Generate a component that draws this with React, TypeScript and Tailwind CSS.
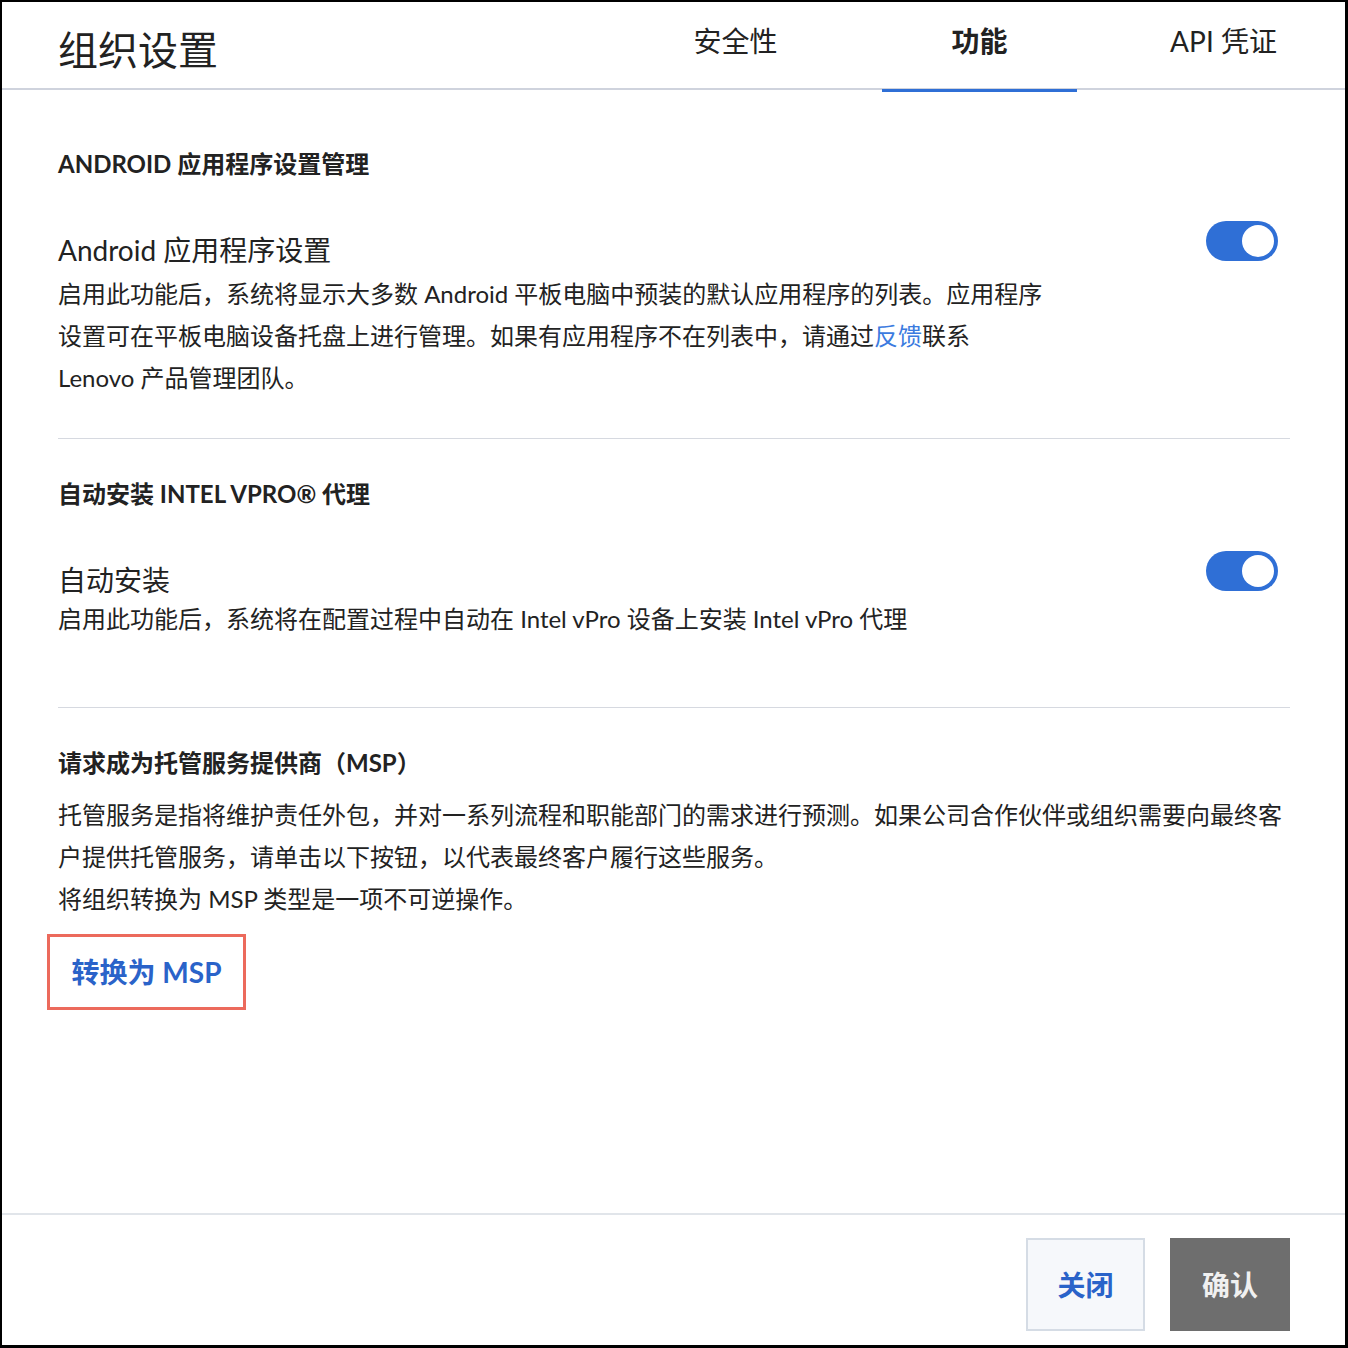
import React, { useState } from 'react';

const FONT = "font-['Lato','Noto_Sans_CJK_SC',sans-serif]";

const Toggle: React.FC<{ on: boolean; onChange: () => void }> = ({ on, onChange }) => (
  <button
    onClick={onChange}
    className={`relative w-[72px] h-[40px] rounded-full shrink-0 ${on ? 'bg-[#2f6fd6]' : 'bg-gray-300'}`}
  >
    <span
      className={`absolute top-[4px] w-[32px] h-[32px] rounded-full bg-white ${on ? 'right-[4px]' : 'left-[4px]'}`}
    />
  </button>
);

const tabs = ['安全性', '功能', 'API 凭证'];

const App: React.FC = () => {
  const [active, setActive] = useState(1);
  const [android, setAndroid] = useState(true);
  const [vpro, setVpro] = useState(true);

  return (
    <div className={`${FONT} w-[1348px] h-[1348px] bg-white border-black border-t-2 border-l-2 border-r-[3px] border-b-[3px] flex flex-col text-[#222]`}>
      {/* header */}
      <div className="h-[88px] shrink-0 flex justify-between border-b-2 border-[#cfd3dd] pl-[56px] pr-[24px]">
        <h1 className="text-[40px] leading-[48px] pt-[24px] text-[#222]">组织设置</h1>
        <div className="flex gap-[49px]">
          {tabs.map((t, i) => (
            <button
              key={t}
              onClick={() => setActive(i)}
              className={`relative w-[195px] h-[88px] text-[28px] leading-[36px] pt-[21px] flex justify-center items-start ${i === active ? 'font-bold' : ''}`}
            >
              {t}
              {i === active && <span className="absolute left-0 right-0 bottom-[-2px] h-[3px] bg-[#2f6fd6]" />}
            </button>
          ))}
        </div>
      </div>

      {/* content */}
      <div className="flex-1 pl-[56px] pr-[55px]">
        <section className="pt-[59px] pb-[39px] border-b border-[#d6d9e0]">
          <h2 className="text-[24px] leading-[30px] font-bold">ANDROID 应用程序设置管理</h2>
          <div className="mt-[42px] flex justify-between items-start">
            <div className="pt-[11px]">
              <div className="text-[28px] leading-[36px]">Android 应用程序设置</div>
              <p className="mt-[5px] w-[990px] text-[24px] leading-[42px]">
                启用此功能后，系统将显示大多数 Android 平板电脑中预装的默认应用程序的列表。应用程序设置可在平板电脑设备托盘上进行管理。如果有应用程序不在列表中，请通过<a href="#" className="text-[#3b7be0]">反馈</a>联系 Lenovo 产品管理团队。
              </p>
            </div>
            <div className="mr-[12px]">
              <Toggle on={android} onChange={() => setAndroid(!android)} />
            </div>
          </div>
        </section>

        <section className="pt-[40px] pb-[67px] border-b border-[#d6d9e0]">
          <h2 className="text-[24px] leading-[30px] font-bold">自动安装 INTEL VPRO® 代理</h2>
          <div className="mt-[42px] flex justify-between items-start">
            <div className="pt-[11px]">
              <div className="text-[28px] leading-[36px]">自动安装</div>
              <p className="text-[24px] leading-[42px]">
                启用此功能后，系统将在配置过程中自动在 Intel vPro 设备上安装 Intel vPro 代理
              </p>
            </div>
            <div className="mr-[12px]">
              <Toggle on={vpro} onChange={() => setVpro(!vpro)} />
            </div>
          </div>
        </section>

        <section className="pt-[40px]">
          <h2 className="text-[24px] leading-[30px] font-bold">请求成为托管服务提供商（MSP）</h2>
          <p className="mt-[16px] text-[24px] leading-[42px]">
            托管服务是指将维护责任外包，并对一系列流程和职能部门的需求进行预测。如果公司合作伙伴或组织需要向最终客户提供托管服务，请单击以下按钮，以代表最终客户履行这些服务。
          </p>
          <p className="text-[24px] leading-[42px]">将组织转换为 MSP 类型是一项不可逆操作。</p>
          <button className="mt-[14px] -ml-[11px] w-[199px] h-[76px] border-[3px] border-[#ec6a5c] text-[28px] font-bold text-[#2a63c9] flex items-center justify-center">
            转换为 MSP
          </button>
        </section>
      </div>

      {/* footer */}
      <div className="h-[132px] shrink-0 border-t-2 border-[#e1e5ea] flex justify-end items-start gap-[25px] pt-[23px] pr-[55px]">
        <button className="w-[119px] h-[93px] bg-[#f6f8fb] border-2 border-[#d5dce5] text-[28px] font-bold text-[#2a63c9]">
          关闭
        </button>
        <button className="w-[120px] h-[93px] bg-[#6e6e6e] text-[28px] font-bold text-[#f0f0f0]">
          确认
        </button>
      </div>
    </div>
  );
};

export default App;
